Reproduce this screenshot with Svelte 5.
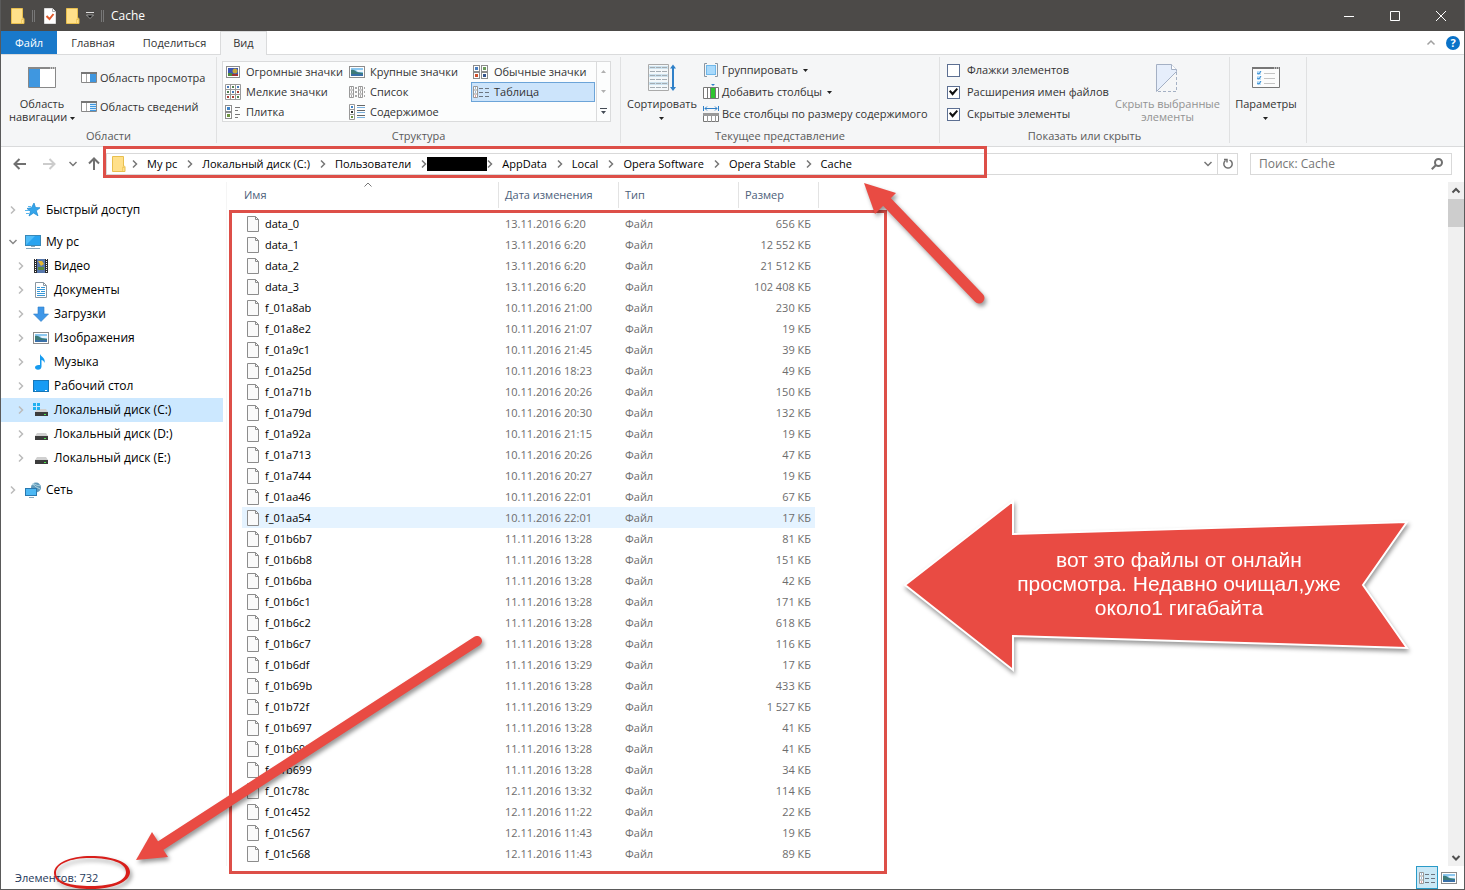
<script lang="ts">
  interface FileRow {
    name: string;
    date: string;
    size: string;
  }

  interface TreeItem {
    label: string;
    icon: string;
  }

  const tabs = ['Главная', 'Поделиться'];

  const layouts = [
    { label: 'Огромные значки', icon: 'huge' },
    { label: 'Крупные значки', icon: 'picture' },
    { label: 'Обычные значки', icon: 'medium' },
    { label: 'Мелкие значки', icon: 'small' },
    { label: 'Список', icon: 'list' },
    { label: 'Таблица', icon: 'details' },
    { label: 'Плитка', icon: 'tiles' },
    { label: 'Содержимое', icon: 'content' },
  ];

  const path = [
    'My pc',
    'Локальный диск (C:)',
    'Пользователи',
    '',
    'AppData',
    'Local',
    'Opera Software',
    'Opera Stable',
    'Cache',
  ];

  const places: TreeItem[] = [
    { label: 'Видео', icon: 'video' },
    { label: 'Документы', icon: 'document' },
    { label: 'Загрузки', icon: 'download' },
    { label: 'Изображения', icon: 'picture' },
    { label: 'Музыка', icon: 'music' },
    { label: 'Рабочий стол', icon: 'desktop' },
    { label: 'Локальный диск (C:)', icon: 'system-disk' },
    { label: 'Локальный диск (D:)', icon: 'disk' },
    { label: 'Локальный диск (E:)', icon: 'disk' },
  ];

  const files: FileRow[] = [
    { name: 'data_0', date: '13.11.2016 6:20', size: '656' },
    { name: 'data_1', date: '13.11.2016 6:20', size: '12 552' },
    { name: 'data_2', date: '13.11.2016 6:20', size: '21 512' },
    { name: 'data_3', date: '13.11.2016 6:20', size: '102 408' },
    { name: 'f_01a8ab', date: '10.11.2016 21:00', size: '230' },
    { name: 'f_01a8e2', date: '10.11.2016 21:07', size: '19' },
    { name: 'f_01a9c1', date: '10.11.2016 21:45', size: '39' },
    { name: 'f_01a25d', date: '10.11.2016 18:23', size: '49' },
    { name: 'f_01a71b', date: '10.11.2016 20:26', size: '150' },
    { name: 'f_01a79d', date: '10.11.2016 20:30', size: '132' },
    { name: 'f_01a92a', date: '10.11.2016 21:15', size: '19' },
    { name: 'f_01a713', date: '10.11.2016 20:26', size: '47' },
    { name: 'f_01a744', date: '10.11.2016 20:27', size: '19' },
    { name: 'f_01aa46', date: '10.11.2016 22:01', size: '67' },
    { name: 'f_01aa54', date: '10.11.2016 22:01', size: '17' },
    { name: 'f_01b6b7', date: '11.11.2016 13:28', size: '81' },
    { name: 'f_01b6b8', date: '11.11.2016 13:28', size: '151' },
    { name: 'f_01b6ba', date: '11.11.2016 13:28', size: '42' },
    { name: 'f_01b6c1', date: '11.11.2016 13:28', size: '171' },
    { name: 'f_01b6c2', date: '11.11.2016 13:28', size: '618' },
    { name: 'f_01b6c7', date: '11.11.2016 13:28', size: '116' },
    { name: 'f_01b6df', date: '11.11.2016 13:29', size: '17' },
    { name: 'f_01b69b', date: '11.11.2016 13:28', size: '433' },
    { name: 'f_01b72f', date: '11.11.2016 13:29', size: '1 527' },
    { name: 'f_01b697', date: '11.11.2016 13:28', size: '41' },
    { name: 'f_01b698', date: '11.11.2016 13:28', size: '41' },
    { name: 'f_01b699', date: '11.11.2016 13:28', size: '34' },
    { name: 'f_01c78c', date: '12.11.2016 13:32', size: '114' },
    { name: 'f_01c452', date: '12.11.2016 11:22', size: '22' },
    { name: 'f_01c567', date: '12.11.2016 11:43', size: '19' },
    { name: 'f_01c568', date: '12.11.2016 11:43', size: '89' },
  ];

  let activeLayout = $state('Таблица');
  let activePlace = $state('Локальный диск (C:)');
  let hotFile = $state('f_01aa54');
  let showFlags = $state(false);
  let showExtensions = $state(true);
  let showHidden = $state(true);
  let query = $state('');
</script>

{#snippet chevron(dir: string)}
  <svg class="chevron" width="10" height="10" viewBox="0 0 10 10" aria-hidden="true">
    {#if dir === 'right'}
      <path d="M3 1.5 6.5 5 3 8.5" />
    {:else if dir === 'down'}
      <path d="M1.5 3 5 6.5 8.5 3" />
    {:else}
      <path d="M1.5 6.5 5 3l3.500 3.500" />
    {/if}
  </svg>
{/snippet}

{#snippet caret()}
  <svg class="caret" width="5" height="3" viewBox="0 0 5 3" aria-hidden="true"><path d="M0 0h5L2.500 3z" /></svg>
{/snippet}

{#snippet folder()}
  <svg width="14" height="16" viewBox="0 0 14 16" aria-hidden="true">
    <path d="M.5.5h11v11l1.500-1v5H.5z" fill="#ffe08a" stroke="#e8bf4e" />
    <path d="M10.500 15V11l2-1" fill="none" stroke="#f3cd62" />
  </svg>
{/snippet}

{#snippet thumb(x: number, y: number, fill: string)}
  <rect x={x + 0.5} y={y + 0.5} width="6" height="6" fill="#fff" stroke="#8c8c8c" />
  <rect x={x + 2} y={y + 2} width="3" height="3" {fill} />
{/snippet}

{#snippet icon(name: string)}
  <svg class="icon" width="16" height="16" viewBox="0 0 16 16" aria-hidden="true">
    {#if name === 'huge'}
      <rect x="1.500" y="2.500" width="13" height="11" fill="#fff" stroke="#8c8c8c" />
      <path d="M3 4h10v8H3z" fill="#3a57b4" />
      <path d="M3 9h4l2 3H3z" fill="#4f8a3c" />
      <circle cx="10" cy="7" r="2.500" fill="#c8a83a" />
      <path d="M7 10h6v2H7z" fill="#a03434" />
    {:else if name === 'picture'}
      <rect x=".5" y="2.500" width="15" height="11" fill="#fff" stroke="#8c8c8c" />
      <path d="M2 4h12v8H2z" fill="#8cc8f0" />
      <path d="M2 6c3-1 4 1 6 2l6 1v3H2z" fill="#3d7a78" />
      <path d="M7 6h7v2H9z" fill="#e9f5fc" />
      <path d="M2 10h12v2H2z" fill="#3970a8" />
    {:else if name === 'medium'}
      {@render thumb(0, 1, '#4a7ec0')}
      {@render thumb(8, 1, '#6d9c5a')}
      {@render thumb(0, 8, '#d0502c')}
      {@render thumb(8, 8, '#35558c')}
    {:else if name === 'small'}
      <path d="M.5.5h15v15H.5zM5.500 0v16M10.500 0v16M0 5.500h16M0 10.500h16" fill="#fff" stroke="#9a9a9a" />
      <path d="M2 2h2v2H2zM12 2h2v2h-2zM7 7h2v2H7z" fill="#4679b8" />
      <path d="M7 2h2v2H7zM2 7h2v2H2zM12 12h2v2h-2z" fill="#528052" />
      <path d="M12 7h2v2h-2zM2 12h2v2H2zM7 12h2v2H7z" fill="#aa3f35" />
    {:else if name === 'list'}
      <path d="M.5 2.500h4v11h-4zM0 6h5M0 10h5M9.500 2.500h4v11h-4zM9 6h5M9 10h5" fill="#fff" stroke="#999" />
      <path d="M2 4h1M2 8h1M2 12h1M11 4h1M11 8h1M11 12h1M6 4h2M6 8h2M6 12h2M15 4h1M15 8h1M15 12h1" stroke="#555" />
    {:else if name === 'details'}
      <path d="M.5 2.500h4v11h-4zM0 6h5M0 10h5" fill="#fff" stroke="#999" />
      <path d="M2 4h1M2 8h1" stroke="#3874b0" />
      <path d="M2 12h1" stroke="#c04040" />
      <path d="M6 4.500h4M12 4.500h4M6 8.500h4M12 8.500h4M6 12.500h4M12 12.500h4" stroke="#6c7580" />
    {:else if name === 'tiles'}
      {@render thumb(0, 1, '#3f84c8')}
      {@render thumb(0, 8, '#6e9440')}
      <path d="M10 3.500h5M10 6.500h3M10 10.500h5M10 13.500h3" stroke="#777" />
    {:else if name === 'content'}
      <path d="M.5.5h5v15h-5zM0 5.500h6M0 10.500h6" fill="#fff" stroke="#999" />
      <path d="M2 2h2v2H2z" fill="#3f84c8" />
      <path d="M2 7h2v2H2z" fill="#333" />
      <path d="M2 12h2v2H2z" fill="#6e9440" />
      <path d="M8 1.500h8M8 6.500h8M8 11.500h8" stroke="#666" />
      <path d="M8 3.500h8M8 8.500h8M8 13.500h8" stroke="#7ab0de" />
    {:else if name === 'preview' || name === 'info'}
      <path d="M.5 3v9.500h15V3" fill="#fff" stroke="#888" />
      <path d="M0 2h16v2H0z" fill="#777" />
      <path d="M5.500 4v8" stroke="#aaa" />
      {#if name === 'preview'}
        <path d="M9 4h6v8H9z" fill="#3f97e0" />
      {:else}
        <path d="M9 4h6v8H9z" fill="#d4eafa" />
        <path d="M9 5.500h6M9 7.500h6M9 9.500h6M9 11.500h6" stroke="#3f97e0" />
      {/if}
    {:else if name === 'group'}
      <path d="M4 1.500H1.500v13H4M12 1.500h2.500v13H12" fill="none" stroke="#8a96a2" />
      <rect x="3.500" y="3.500" width="9" height="9" fill="#a9dafc" stroke="#70b8ea" />
    {:else if name === 'columns'}
      <path d="M.5 3.500h15v11H.5zM4.500 3v12" fill="#fff" stroke="#777" />
      <path d="M8 4h4v10H8z" fill="#2fc52f" />
      <path d="M7.500 3v12M12.500 3v12" stroke="#777" />
      <path d="M8 0h4l-2 2z" fill="#2f80c8" />
    {:else if name === 'fit'}
      <path d="M.5 0v5M15.500 0v5M2 2.500h12M4 .5l-2 2 2 2M12 .5l2 2-2 2" fill="none" stroke="#2f80c8" />
      <path d="M.5 7.500h15v8H.5z" fill="#fff" stroke="#777" />
      <path d="M0 7h16v3H0z" fill="#999" />
      <path d="M4.500 10v6M8.500 10v6M12.500 10v6" stroke="#999" />
    {:else if name === 'star'}
      <path d="m9 1 1.500 4.500 4.500.3-3.700 3 1.700 5L8.500 11 4 14l1.500-4.500L2 6.500l4.500-.8z" fill="#35a5ea" stroke="#1887d0" stroke-width=".7" />
      <path d="M0 8.500h4M1 11.500h3M3 4.500h3" stroke="#5ab7ee" />
    {:else if name === 'pc'}
      <rect x=".5" y="1.500" width="15" height="10" fill="#4fbcf8" stroke="#3888b8" />
      <path d="m1 11 9-9h5v9z" fill="#27a3f0" />
      <path d="M6 12h4v1H6zM1 14h14v1H1z" fill="#88a8bc" />
    {:else if name === 'video'}
      <path d="M1 1h14v14H1z" fill="#2c2c2c" />
      <path d="M4 1h8v14H4z" fill="#5878ac" />
      <path d="M5 3h4l2 3-3 2z" fill="#e4b832" />
      <path d="M5 9h6v3H5z" fill="#5c8a3c" />
      <path d="M2.500 1v14M13.500 1v14" stroke="#fff" stroke-dasharray="1 1" />
    {:else if name === 'document'}
      <path d="M2.500.5h8l3 3v12h-11z" fill="#fff" stroke="#8a96a0" />
      <path d="M10.500.5v3h3" fill="none" stroke="#8a96a0" />
      <path d="M4 5.500h3M8 5.500h4M4 7.500h8M4 9.500h3M8 9.500h4M4 11.500h8M4 13.500h8" stroke="#3898d8" />
    {:else if name === 'download'}
      <path d="M5 1h6v7h4.500L8 15.500.5 8H5z" fill="#3f97e8" stroke="#2d7cc8" stroke-width=".6" />
    {:else if name === 'music'}
      <path d="M7 0c1 3 6 4 4.500 9-.5-2-2-3-3-3v6.500c0 2-1.500 3.300-3.500 3.300s-3-1-3-2.500S4 10.500 7 11z" fill="#169bef" />
    {:else if name === 'desktop'}
      <rect x=".5" y="2.500" width="15" height="11" fill="#169bf4" stroke="#1676b8" />
      <path d="M2 12.500h1M12 12.500h2" stroke="#fff" />
    {:else if name === 'disk' || name === 'system-disk'}
      <path d="M4 7h9l2 3H2z" fill="#d0d0d0" />
      <path d="M2 10h13v4H2z" fill="#3c3c3c" />
      <path d="M11 12h2v1h-2z" fill="#4be84b" />
      {#if name === 'system-disk'}
        <path d="M0 1h3v3H0zM4 1h3v3H4zM0 5h3v3H0zM4 5h3v3H4z" fill="#20b0f0" />
      {/if}
    {:else if name === 'network'}
      <circle cx="11" cy="5.500" r="5" fill="#6098b8" />
      <path d="M7 3c3-3 4 2 8 0M8 1c1 4 4 4 7 6" fill="none" stroke="#b8dce8" />
      <rect x=".5" y="6.500" width="11" height="7" fill="#4cb8f4" stroke="#2878b0" />
      <path d="M4 15.500h5" stroke="#88a8bc" />
    {/if}
  </svg>
{/snippet}

<div class="window">
  <header class="titlebar">
    {@render folder()}
    <span class="grip"></span>
    <button class="quick" aria-label="Свойства">
      <svg width="12" height="16" viewBox="0 0 12 16">
        <path d="M.5.5h8l3 3v12H.5z" fill="#fff" stroke="#ddd" />
        <path d="M8.500.5v3h3" fill="none" stroke="#aaa" />
        <path d="m2.500 8 3 3 4-5" fill="none" stroke="#e0592a" stroke-width="2" />
      </svg>
    </button>
    <button class="quick folder-btn" aria-label="Новая папка">{@render folder()}</button>
    <button class="quick" aria-label="Настройка панели быстрого доступа">
      <svg width="8" height="7" viewBox="0 0 8 7"><path d="M0 .5h8" stroke="#ddd" /><path d="M.5 3h7L4 6.500z" fill="#111" stroke="#ddd" stroke-width=".6" /></svg>
    </button>
    <span class="grip last"></span>
    <h1>Cache</h1>
    <div class="window-buttons">
      <button aria-label="Свернуть"><svg width="10" height="10" viewBox="0 0 10 10"><path d="M0 5.500h10" /></svg></button>
      <button aria-label="Развернуть"><svg width="10" height="10" viewBox="0 0 10 10"><path d="M.5.5h9v9h-9z" /></svg></button>
      <button aria-label="Закрыть"><svg width="10" height="10" viewBox="0 0 10 10"><path d="m0 0 10 10M10 0 0 10" /></svg></button>
    </div>
  </header>

  <div class="tabs">
    <button class="tab tab--file">Файл</button>
    {#each tabs as tab}
      <button class="tab">{tab}</button>
    {/each}
    <button class="tab tab--active">Вид</button>
    <div class="tab-tools">
      <button aria-label="Свернуть ленту">{@render chevron('up')}</button>
      <button class="help" aria-label="Справка">?</button>
    </div>
  </div>

  <section class="ribbon">
    <div class="group group--panes">
      <div class="group-body">
        <button class="big">
          <svg width="28" height="28" viewBox="0 0 28 28" aria-hidden="true">
            <path d="M.5 3.500h27v20H.5z" fill="#fff" stroke="#888" />
            <path d="M0 3h28v2H0z" fill="#888" />
            <path d="M1 5h11v18H1z" fill="#3f97e0" />
            <path d="M22 4h1M24 4h1M26 4h1" stroke="#fff" />
          </svg>
          <span>Область<br />навигации {@render caret()}</span>
        </button>
        <div class="stack stack--wide">
          <button class="command">{@render icon('preview')}Область просмотра</button>
          <button class="command">{@render icon('info')}Область сведений</button>
        </div>
      </div>
      <h2>Области</h2>
    </div>

    <div class="group group--layout">
      <div class="group-body">
        <div class="gallery">
          <div class="gallery-items">
            {#each layouts as item}
              <button
                class={item.label === activeLayout ? 'layout layout--active' : 'layout'}
                onclick={() => (activeLayout = item.label)}
              >
                {@render icon(item.icon)}{item.label}
              </button>
            {/each}
          </div>
          <div class="gallery-scroll">
            <button aria-label="Вверх"><svg width="5" height="3" viewBox="0 0 5 3"><path d="M0 3h5L2.500 0z" fill="#b0b0b0" /></svg></button>
            <button aria-label="Вниз"><svg width="5" height="3" viewBox="0 0 5 3"><path d="M0 0h5L2.500 3z" fill="#b0b0b0" /></svg></button>
            <button aria-label="Дополнительно"><svg width="7" height="6" viewBox="0 0 7 6"><path d="M0 0h7v1H0zM1 3h5L3.500 6z" fill="#444b55" /></svg></button>
          </div>
        </div>
      </div>
      <h2>Структура</h2>
    </div>

    <div class="group group--view">
      <div class="group-body">
        <button class="big">
          <svg width="28" height="28" viewBox="0 0 28 28" aria-hidden="true">
            <path d="M.5.5h20v26H.5z" fill="#f4f8fa" stroke="#aaa" />
            <path d="M1 3.500h19M1 11.500h19M1 19.500h19" stroke="#cde2ee" stroke-width="3" />
            <path d="M2 3.500h17M2 7.500h17M2 11.500h17M2 15.500h17M2 19.500h17M2 23.500h17" stroke="#a4acb2" stroke-dasharray="5 1" />
            <path d="M25 3v22" stroke="#2f80c8" stroke-width="2" />
            <path d="M22 4.500 25 .5l3 4zM22 23l3 4 3-4z" fill="#2f80c8" />
          </svg>
          <span>Сортировать<br />{@render caret()}</span>
        </button>
        <div class="stack">
          <button class="command">{@render icon('group')}Группировать {@render caret()}</button>
          <button class="command">{@render icon('columns')}Добавить столбцы {@render caret()}</button>
          <button class="command">{@render icon('fit')}Все столбцы по размеру содержимого</button>
        </div>
      </div>
      <h2>Текущее представление</h2>
    </div>

    <div class="group group--show">
      <div class="group-body">
        <div class="stack">
          <label class="check"><input type="checkbox" bind:checked={showFlags} />Флажки элементов</label>
          <label class="check"><input type="checkbox" bind:checked={showExtensions} />Расширения имен файлов</label>
          <label class="check"><input type="checkbox" bind:checked={showHidden} />Скрытые элементы</label>
        </div>
        <button class="big" disabled>
          <svg width="22" height="28" viewBox="0 0 22 28" aria-hidden="true">
            <path d="M.5.5h15l5 5v2L.5 27.500z" fill="#e6eefb" stroke="#a4b0c4" />
            <path d="M15.500.5v5h5" fill="#fff" stroke="#a4b0c4" />
            <path d="M20.500 8v19.500H1" fill="none" stroke="#a4b0c4" stroke-dasharray="3 2" />
          </svg>
          <span>Скрыть выбранные<br />элементы</span>
        </button>
      </div>
      <h2>Показать или скрыть</h2>
    </div>

    <div class="group group--options">
      <div class="group-body">
        <button class="big">
          <svg width="28" height="28" viewBox="0 0 28 28" aria-hidden="true">
            <path d="M.5 3.500h27v20H.5z" fill="#fcfcfc" stroke="#777" />
            <path d="M0 3h28v2H0z" fill="#777" />
            <path d="M22 4h1M24 4h1M26 4h1" stroke="#fff" />
            <path d="M5 7h4v4H5zM5 12h4v4H5zM5 17h4v4H5z" fill="#bfe0f8" />
            <path d="m5 9 2 1 2-3M5 14l2 1 2-3M5 19l2 1 2-3" fill="none" stroke="#2f88d0" />
            <path d="M12 9.500h11M12 14.500h11M12 19.500h11" stroke="#c4c4c4" />
          </svg>
          <span>Параметры<br />{@render caret()}</span>
        </button>
      </div>
    </div>
  </section>

  <div class="address-row">
    <div class="history">
      <button aria-label="Назад"><svg width="14" height="12" viewBox="0 0 14 12"><path d="M13 6H1.500M6.500 1l-5 5 5 5" /></svg></button>
      <button aria-label="Вперед" disabled><svg width="14" height="12" viewBox="0 0 14 12"><path d="M1 6h11.500M7.500 1l5 5-5 5" /></svg></button>
      <button class="recent" aria-label="Последние расположения">{@render chevron('down')}</button>
      <button aria-label="Вверх"><svg width="12" height="14" viewBox="0 0 12 14"><path d="M6 13V1.500M1 6.500l5-5 5 5" /></svg></button>
    </div>
    <div class="address">
      {@render folder()}
      <nav class="crumbs">
        {#each path as part}
          {@render chevron('right')}
          {#if part}
            <a href="#{part}">{part}</a>
          {:else}
            <span class="redacted"></span>
          {/if}
        {/each}
      </nav>
      <button class="drop" aria-label="Предыдущие расположения">{@render chevron('down')}</button>
      <button class="refresh" aria-label="Обновить">
        <svg width="12" height="12" viewBox="0 0 12 12"><path d="M3.500 2.500a4.200 4.200 0 1 0 5.500.4M2 1.500h3v3M9 3 7.500 2" /></svg>
      </button>
    </div>
    <label class="search">
      <input type="text" placeholder="Поиск: Cache" aria-label="Поиск" bind:value={query} />
      <svg width="12" height="12" viewBox="0 0 12 12" aria-hidden="true"><circle cx="7.500" cy="4.500" r="3.500" /><path d="M5 7 .8 11.200" /></svg>
    </label>
  </div>

  <main>
    <nav class="tree">
      <button class="node node--root">{@render chevron('right')}{@render icon('star')}Быстрый доступ</button>
      <div class="branch">
        <button class="node node--root node--open">{@render chevron('down')}{@render icon('pc')}My pc</button>
        {#each places as place}
          <button
            class={place.label === activePlace ? 'node node--active' : 'node'}
            onclick={() => (activePlace = place.label)}
          >
            {@render chevron('right')}{@render icon(place.icon)}{place.label}
          </button>
        {/each}
      </div>
      <button class="node node--root">{@render chevron('right')}{@render icon('network')}Сеть</button>
    </nav>

    <div class="files">
      <table>
        <thead>
          <tr>
            <th class="col-name"><button>Имя<span class="sort">{@render chevron('up')}</span></button></th>
            <th class="col-date"><button>Дата изменения</button></th>
            <th class="col-type"><button>Тип</button></th>
            <th class="col-size"><button>Размер</button></th>
          </tr>
        </thead>
        <tbody>
          {#each files as file}
            <tr class:hot={file.name === hotFile} onmouseenter={() => (hotFile = file.name)}>
              <td class="name">
                <svg width="12" height="16" viewBox="0 0 12 16" aria-hidden="true">
                  <path d="M.5.5h8l3 3v12H.5z" fill="#fafafa" stroke="#8c8c8c" />
                  <path d="M8.500.5v3h3" fill="none" stroke="#8c8c8c" />
                </svg>
                {file.name}
              </td>
              <td>{file.date}</td>
              <td>Файл</td>
              <td class="size">{file.size} КБ</td>
            </tr>
          {/each}
        </tbody>
      </table>
    </div>

    <div class="scrollbar">
      <button aria-label="Прокрутить вверх">{@render chevron('up')}</button>
      <div class="thumb"></div>
      <button aria-label="Прокрутить вниз">{@render chevron('down')}</button>
    </div>
  </main>

  <footer>
    <span>Элементов: 732</span>
    <div class="modes">
      <button class="mode mode--active" aria-label="Таблица">{@render icon('details')}</button>
      <button class="mode" aria-label="Крупные значки">{@render icon('picture')}</button>
    </div>
  </footer>

  <!-- пометки поверх окна -->
  <div class="mark mark--path"></div>
  <div class="mark mark--files"></div>

  <svg class="note note--path" width="140" height="140" viewBox="0 0 140 140" aria-hidden="true">
    <path d="M26 21 119 118" stroke="#e94b43" stroke-width="11" stroke-linecap="round" />
    <path d="M4 3 36 13 15 34z" fill="#e94b43" />
  </svg>
  <svg class="note note--count" width="370" height="250" viewBox="0 0 370 250" aria-hidden="true">
    <path d="M27 218 347 11" stroke="#e94b43" stroke-width="10" stroke-linecap="round" />
    <path d="M6 230 22 202 38 227z" fill="#e94b43" />
  </svg>
  <svg class="note note--ring" width="84" height="38" viewBox="0 0 84 38" aria-hidden="true">
    <path
      fill-rule="evenodd"
      fill="#d81e1a"
      d="M41 1c21 0 39 6 39 16S63 34 41 34 4 28 4 18 20 1 41 1zM40 3C20 3 6 9 6 18s14 13 35 13 35-5 35-14S61 3 40 3z"
    />
  </svg>
  <div class="callout">
    <svg width="512" height="180" viewBox="0 0 512 180" aria-hidden="true">
      <path d="M5 89 113 5v33l394-12-44 63 44 63-394-12v34z" fill="#e94b43" stroke="#fff" stroke-width="2" />
    </svg>
    <p>вот это файлы от онлайн<br />просмотра. Недавно очищал,уже<br />около1 гигабайта</p>
  </div>
</div>

<style>
  :global(body) {
    margin: 0;
  }

  .window {
    position: relative;
    box-sizing: border-box;
    min-height: 100vh;
    display: flex;
    flex-direction: column;
    overflow: hidden;
    border: 1px solid #5a5a5a;
    border-top: 0;
    background: #fff;
    color: #000;
    font: 11px/16px 'Open Sans', 'Noto Sans', sans-serif;
  }

  button {
    display: flex;
    align-items: center;
    justify-content: center;
    padding: 0;
    border: 0;
    background: none;
    color: inherit;
    font: inherit;
    white-space: nowrap;
  }

  a {
    color: inherit;
    text-decoration: none;
  }

  svg {
    flex-shrink: 0;
  }

  h1,
  h2,
  p {
    margin: 0;
    font-weight: 400;
  }

  .chevron {
    fill: none;
    stroke: #777;
    stroke-width: 1.5;
  }

  .caret {
    fill: #222;
    vertical-align: middle;
  }

  /* title bar */
  .titlebar {
    display: flex;
    align-items: center;
    height: 31px;
    padding-left: 10px;
    background: #4c4a48;
    color: #fff;
  }

  h1 {
    font-size: 12px;
  }

  .grip {
    width: 1px;
    height: 12px;
    margin: 0 9px 0 7px;
    border: 1px solid #777;
    border-width: 0 1px;
  }

  .grip.last {
    margin: 0 7px;
  }

  .folder-btn {
    margin: 0 6px 0 10px;
  }

  .window-buttons {
    display: flex;
    margin-left: auto;
  }

  .window-buttons button {
    width: 46px;
    height: 31px;
  }

  .window-buttons path {
    fill: none;
    stroke: #fff;
  }

  /* tabs */
  .tabs {
    display: flex;
    height: 23px;
    border-bottom: 1px solid #dadbdc;
    color: #333;
  }

  .tab {
    padding: 0 14px;
  }

  .tab--file {
    background: #1979ca;
    color: #fff;
  }

  .tab--active {
    box-sizing: border-box;
    height: 24px;
    padding: 0 12px 1px;
    border: 1px solid #dadbdc;
    border-bottom: 0;
    background: #f5f6f7;
  }

  .tab-tools {
    display: flex;
    align-items: center;
    gap: 10px;
    margin-left: auto;
    padding-right: 4px;
  }

  .tab-tools .chevron {
    stroke: #a0a0a0;
  }

  .help {
    width: 14px;
    height: 14px;
    border-radius: 50%;
    background: #0a72c8;
    color: #fff;
    font-weight: 700;
  }

  /* ribbon */
  .ribbon {
    display: flex;
    height: 91px;
    border-bottom: 1px solid #dadbdc;
    background: #f5f6f7;
    color: #333;
  }

  .group {
    box-sizing: border-box;
    display: flex;
    flex-direction: column;
    margin: 2px 0 3px;
    padding: 2px 5px 0;
    border-right: 1px solid #e0e1e2;
  }

  .group-body {
    display: flex;
    align-items: flex-start;
    height: 72px;
  }

  .group h2 {
    font-size: 11px;
    line-height: 14px;
    text-align: center;
    color: #5a5a5a;
  }

  .group--panes {
    width: 216px;
  }

  .group--layout {
    width: 404px;
  }

  .group--view {
    width: 319px;
  }

  .group--show {
    width: 290px;
  }

  .group--options {
    width: 77px;
    padding: 2px 4px 0 0;
  }

  .big {
    flex-direction: column;
    gap: 5px;
    min-width: 72px;
    padding-top: 5px;
    line-height: 13px;
  }

  .big:disabled {
    margin: 0 4px 0 auto;
    color: #929292;
  }

  .stack {
    display: flex;
    flex-direction: column;
    align-items: flex-start;
  }

  .stack--wide {
    gap: 7px;
    margin-left: 3px;
    padding-top: 8px;
  }

  .command {
    gap: 3px;
    height: 22px;
  }

  .group--view .stack {
    margin-left: 5px;
  }

  .command .caret {
    margin-left: 2px;
  }

  .check {
    display: flex;
    align-items: center;
    gap: 7px;
    height: 22px;
    white-space: nowrap;
  }

  .check input {
    appearance: none;
    box-sizing: border-box;
    width: 13px;
    height: 13px;
    margin: 0 0 0 2px;
    border: 1px solid #5c6f92;
    background: #fff;
  }

  .check input:checked::before {
    content: '';
    display: block;
    width: 9px;
    height: 9px;
    margin: 1px;
    background: #111;
    clip-path: polygon(0 45%, 15% 28%, 40% 52%, 85% 5%, 100% 20%, 40% 92%);
  }

  .gallery {
    box-sizing: border-box;
    display: flex;
    flex: 1;
    height: 61px;
    margin: 2px 4px 0 0;
    border: 1px solid #dadbdc;
    background: #fcfdfd;
  }

  .gallery-items {
    display: grid;
    flex: 1;
    grid-template-columns: repeat(3, 124px);
    grid-auto-rows: 20px;
    overflow: hidden;
  }

  .layout {
    justify-content: flex-start;
    gap: 5px;
    padding-left: 1px;
    border: 1px solid transparent;
  }

  .layout--active {
    border-color: #6ca4d8;
    background: #cce4fb;
  }

  .gallery-scroll {
    display: flex;
    flex-direction: column;
    width: 13px;
    border-left: 1px solid #dadbdc;
  }

  .gallery-scroll button {
    flex: 1;
  }

  /* address */
  .address-row {
    display: flex;
    align-items: center;
    height: 34px;
    padding: 0 12px 1px 0;
  }

  .history {
    display: flex;
    align-items: center;
    gap: 15px;
    width: 105px;
    padding-left: 12px;
    box-sizing: border-box;
  }

  .history .recent {
    margin: 0 -5px 0 -3px;
  }

  .history button > svg:not(.chevron) {
    fill: none;
    stroke: #707070;
    stroke-width: 2;
  }

  .history button:disabled > svg {
    opacity: 0.35;
  }

  .address {
    display: flex;
    flex: 1;
    align-items: center;
    box-sizing: border-box;
    height: 22px;
    padding-left: 5px;
    border: 1px solid #d9d9d9;
  }

  .crumbs {
    display: flex;
    flex: 1;
    align-items: center;
    padding-left: 4px;
  }

  .crumbs a {
    padding: 0 8px 0 7px;
    white-space: nowrap;
  }

  .redacted {
    width: 60px;
    height: 14px;
    margin: 0 -2px;
    background: #000;
  }

  .drop {
    width: 18px;
  }

  .refresh {
    width: 20px;
    height: 20px;
    border-left: 1px solid #d9d9d9;
  }

  .refresh path {
    fill: none;
    stroke: #707070;
    stroke-width: 1.5;
  }

  .search {
    display: flex;
    align-items: center;
    box-sizing: border-box;
    width: 202px;
    height: 22px;
    margin-left: 12px;
    padding: 0 8px;
    border: 1px solid #d9d9d9;
    font-size: 12px;
  }

  .search input {
    flex: 1;
    min-width: 0;
    padding: 0;
    border: 0;
    outline: 0;
    font: inherit;
  }

  .search input::placeholder {
    color: #767676;
  }

  .search svg {
    fill: none;
    stroke: #707070;
    stroke-width: 2;
  }

  /* content */
  main {
    display: flex;
    flex: 1;
  }

  .tree {
    display: flex;
    flex-direction: column;
    gap: 8px;
    box-sizing: border-box;
    width: 226px;
    padding: 16px 3px 0 0;
    border-right: 1px solid #f5f5f5;
    font-size: 12px;
  }

  .node {
    justify-content: flex-start;
    gap: 5px;
    box-sizing: border-box;
    width: 100%;
    height: 24px;
    padding-left: 15px;
  }

  .node--root {
    padding-left: 7px;
  }

  .node .chevron {
    margin-right: 2px;
    stroke: #bbb;
  }

  .node--open .chevron {
    stroke: #888;
  }

  .node--active {
    background: #cce8ff;
  }

  .files {
    flex: 1;
    padding-left: 15px;
  }

  table {
    width: 577px;
    table-layout: fixed;
    border-spacing: 0;
  }

  th {
    height: 31px;
    padding: 0;
    vertical-align: top;
    color: #4c607a;
    font-weight: 400;
  }

  th button {
    position: relative;
    justify-content: flex-start;
    box-sizing: border-box;
    width: 100%;
    height: 26px;
    padding-left: 6px;
    border-right: 1px solid #e3e3e3;
  }

  .sort {
    position: absolute;
    top: -4px;
    left: 121px;
  }

  .sort .chevron {
    stroke-width: 1;
  }

  .col-name {
    width: 257px;
  }

  .col-name button {
    padding-left: 2px;
  }

  .col-date,
  .col-type {
    width: 120px;
  }

  td {
    height: 21px;
    padding: 0 0 0 6px;
    color: #6d6d6d;
    white-space: nowrap;
  }

  td.name {
    display: flex;
    align-items: center;
    gap: 6px;
    padding-left: 5px;
    color: #000;
  }

  td.size {
    padding-right: 4px;
    border-right: 4px solid transparent;
    background-clip: padding-box;
    text-align: right;
  }

  .hot td {
    background-color: #e5f3ff;
  }

  .scrollbar {
    display: flex;
    flex-direction: column;
    width: 16px;
    background: #f0f0f0;
  }

  .scrollbar button {
    height: 17px;
  }

  .scrollbar button:last-child {
    margin-top: auto;
  }

  .scrollbar .chevron {
    stroke: #505050;
    stroke-width: 2;
  }

  .thumb {
    height: 28px;
    background: #cdcdcd;
  }

  footer {
    display: flex;
    align-items: center;
    justify-content: space-between;
    height: 23px;
    padding: 0 4px 0 14px;
    color: #1e395b;
  }

  .modes {
    display: flex;
  }

  .mode {
    box-sizing: border-box;
    width: 22px;
    height: 23px;
    border: 1px solid transparent;
  }

  .mode--active {
    border-color: #2a9bc8;
    background: #cbe8f6;
  }

  /* marks over the window */
  .mark,
  .note,
  .callout {
    position: absolute;
    pointer-events: none;
  }

  .mark {
    box-sizing: border-box;
    border: 3px solid #dd4f48;
  }

  .mark--path {
    top: 146px;
    left: 102px;
    width: 884px;
    height: 32px;
  }

  .mark--files {
    top: 210px;
    left: 228px;
    width: 658px;
    height: 664px;
  }

  .note {
    fill: none;
    filter: drop-shadow(2px 3px 2px rgba(0, 0, 0, 0.4));
  }

  .note--path {
    top: 180px;
    left: 859px;
  }

  .note--count {
    top: 630px;
    left: 129px;
  }

  .note--ring {
    top: 855px;
    left: 49px;
  }

  .callout {
    top: 496px;
    left: 899px;
    width: 512px;
    filter: drop-shadow(1px 3px 2px rgba(0, 0, 0, 0.4));
  }

  .callout svg {
    display: block;
  }

  .callout p {
    position: absolute;
    top: 52px;
    right: 58px;
    left: 104px;
    color: #fff;
    font: 21px/24px 'Liberation Sans', Arial, sans-serif;
    text-align: center;
  }
</style>
